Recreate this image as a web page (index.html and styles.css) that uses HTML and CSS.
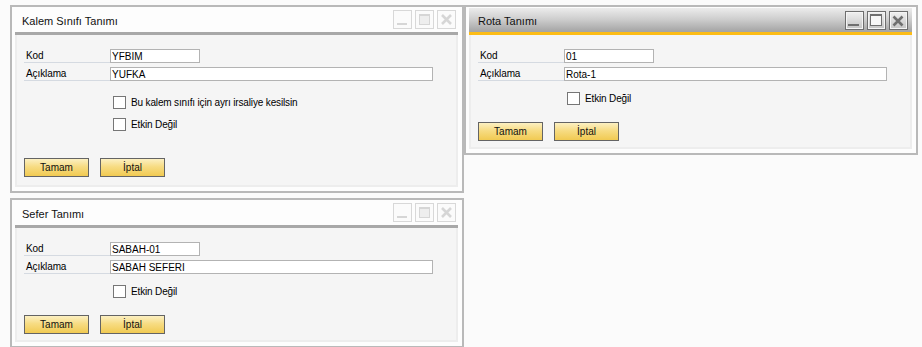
FILE: index.html
```html
<!DOCTYPE html>
<html lang="tr">
<head>
    <meta charset="UTF-8">
    <title>Tanımlar</title>
    <link rel="stylesheet" href="styles.css">
</head>
<body>

    <div class="desktop">

        <!-- Kalem Sınıfı Tanımı -->
        <section class="window window-kalem">
            <header class="titlebar">
                <span class="title">Kalem Sınıfı Tanımı</span>
                <div class="controls">
                    <span class="ctl"><svg viewBox="0 0 17 17"><rect x="3" y="12" width="10" height="2"/></svg></span>
                    <span class="ctl"><svg viewBox="0 0 17 17"><rect class="fill" x="3.5" y="3.5" width="10" height="10"/><rect x="3" y="3" width="11" height="2"/></svg></span>
                    <span class="ctl"><svg viewBox="0 0 17 17"><path class="x" d="M4 4 L13 13 M13 4 L4 13"/></svg></span>
                </div>
            </header>
            <div class="panel">
                <div class="field"><span class="label">Kod</span><input class="input input-short" value="YFBIM" readonly></div>
                <div class="field"><span class="label">Açıklama</span><input class="input input-long" value="YUFKA" readonly></div>
                <div class="checks">
                    <div class="check"><span class="box"></span>Bu kalem sınıfı için ayrı irsaliye kesilsin</div>
                    <div class="check"><span class="box"></span>Etkin Değil</div>
                </div>
                <div class="buttons">
                    <button class="btn">Tamam</button>
                    <button class="btn">İptal</button>
                </div>
            </div>
        </section>

        <!-- Rota Tanımı (active window) -->
        <section class="window window-active">
            <header class="titlebar">
                <span class="title">Rota Tanımı</span>
                <div class="controls">
                    <span class="ctl"><svg viewBox="0 0 17 17"><rect x="2" y="12" width="11" height="2"/></svg></span>
                    <span class="ctl"><svg viewBox="0 0 17 17"><rect class="fill" x="2.5" y="2.5" width="11" height="11"/><rect x="2" y="2" width="12" height="2"/></svg></span>
                    <span class="ctl"><svg viewBox="0 0 17 17"><path class="x" d="M3.5 4.5 L12.5 13.5 M12.5 4.5 L3.5 13.5"/></svg></span>
                </div>
            </header>
            <div class="panel">
                <div class="field"><span class="label">Kod</span><input class="input input-short" value="01" readonly></div>
                <div class="field"><span class="label">Açıklama</span><input class="input input-long" value="Rota-1" readonly></div>
                <div class="checks">
                    <div class="check"><span class="box"></span>Etkin Değil</div>
                </div>
                <div class="buttons">
                    <button class="btn">Tamam</button>
                    <button class="btn">İptal</button>
                </div>
            </div>
        </section>

        <!-- Sefer Tanımı -->
        <section class="window">
            <header class="titlebar">
                <span class="title">Sefer Tanımı</span>
                <div class="controls">
                    <span class="ctl"><svg viewBox="0 0 17 17"><rect x="3" y="12" width="10" height="2"/></svg></span>
                    <span class="ctl"><svg viewBox="0 0 17 17"><rect class="fill" x="3.5" y="3.5" width="10" height="10"/><rect x="3" y="3" width="11" height="2"/></svg></span>
                    <span class="ctl"><svg viewBox="0 0 17 17"><path class="x" d="M4 4 L13 13 M13 4 L4 13"/></svg></span>
                </div>
            </header>
            <div class="panel">
                <div class="field"><span class="label">Kod</span><input class="input input-short" value="SABAH-01" readonly></div>
                <div class="field"><span class="label">Açıklama</span><input class="input input-long" value="SABAH SEFERİ" readonly></div>
                <div class="checks">
                    <div class="check"><span class="box"></span>Etkin Değil</div>
                </div>
                <div class="buttons">
                    <button class="btn">Tamam</button>
                    <button class="btn">İptal</button>
                </div>
            </div>
        </section>

    </div>

</body>
</html>
```

FILE: styles.css
```css
body {
    margin: 0;
    background-color: #fbfbfb;
    font-family: "Liberation Sans", Arial, sans-serif;
    font-size: 10px;
    letter-spacing: -0.1px;
    color: #000;
}
.desktop {
    display: grid;
    grid-template-columns: 454px 454px;
    row-gap: 5px;
    align-items: start;
    padding: 5px 0 0 10px;
}

/* window frame */
.window {
    border: 2px solid #b9b9b9;
    background-color: #fdfdfd;
    padding: 0 4px 4px 3px;
}
.titlebar {
    display: flex;
    align-items: center;
    justify-content: space-between;
    height: 25px;
    border-bottom: 3px solid #a8a8a8;
    padding: 0 2px 0 7px;
}
.title {
    font-size: 11px;
    letter-spacing: 0;
    color: #111;
    padding-top: 2px;
}
.controls {
    display: flex;
    gap: 3px;
}
.ctl {
    display: block;
    width: 19px;
    height: 19px;
    box-sizing: border-box;
    border: 1px solid #d8d8d8;
    background-color: #fbfbfb;
}
.ctl svg {
    display: block;
    width: 17px;
    height: 17px;
    fill: #d6d6d6;
}
.ctl svg .fill {
    fill: #eeeeee;
    stroke: #d6d6d6;
    stroke-width: 1;
}
.ctl svg .x {
    fill: none;
    stroke: #d6d6d6;
    stroke-width: 2.6;
}

/* active window */
.window-active .titlebar {
    margin-top: 1px;
    height: 24px;
    background: linear-gradient(#ececec, #cfcfcf 45%, #a3a3a3);
    border-bottom-color: #fcbc16;
    padding-right: 4px;
    padding-left: 9px;
}
.window-active .ctl {
    border: 1px solid #6e6e6e;
    background: linear-gradient(#f0f0f0, #c4c4c4);
    box-shadow: inset 0 0 0 1px #f4f4f4;
}
.window-active .ctl svg {
    fill: #6f6f6f;
}
.window-active .ctl svg .fill {
    fill: #f7f7f7;
    stroke: #6f6f6f;
}
.window-active .ctl svg .x {
    stroke: #6f6f6f;
}

/* content */
.panel {
    background-color: #f5f5f5;
    border: 2px solid #ededed;
    border-top: none;
    padding: 14px 9px 6px 7px;
}
.field {
    display: flex;
    height: 14px;
    margin-bottom: 4px;
}
.label {
    width: 86px;
    box-sizing: border-box;
    line-height: 13px;
    padding-left: 2px;
    border-bottom: 1px solid #d5dae1;
}
.input {
    box-sizing: border-box;
    height: 14px;
    margin: 0;
    padding: 0 1px;
    border: 1px solid #b3b3b3;
    background-color: #fff;
    font-family: "Liberation Sans", Arial, sans-serif;
    font-size: 10px;
    color: #000;
    outline: none;
}
.input-short {
    width: 90px;
}
.input-long {
    width: 323px;
}
.checks {
    display: flex;
    flex-direction: column;
    gap: 9px;
    margin-top: 11px;
    padding-left: 89px;
}
.check {
    display: flex;
    align-items: center;
    gap: 5px;
    height: 13px;
    letter-spacing: -0.15px;
}
.box {
    width: 13px;
    height: 13px;
    box-sizing: border-box;
    border: 1px solid #767676;
    background-color: #fff;
}
.buttons {
    display: flex;
    gap: 11px;
    margin-top: 17px;
}
.btn {
    width: 65px;
    height: 19px;
    padding: 0;
    border: 1px solid #646464;
    background: linear-gradient(#fcf0c2, #f7dc83 45%, #f1ca52);
    font-family: "Liberation Sans", Arial, sans-serif;
    font-size: 10px;
    color: #111;
}

/* first window has more room around the checkboxes */
.window-kalem .checks {
    margin-top: 15px;
}
.window-kalem .buttons {
    margin-top: 27px;
}
.window-kalem .panel {
    padding-bottom: 8px;
}
```
